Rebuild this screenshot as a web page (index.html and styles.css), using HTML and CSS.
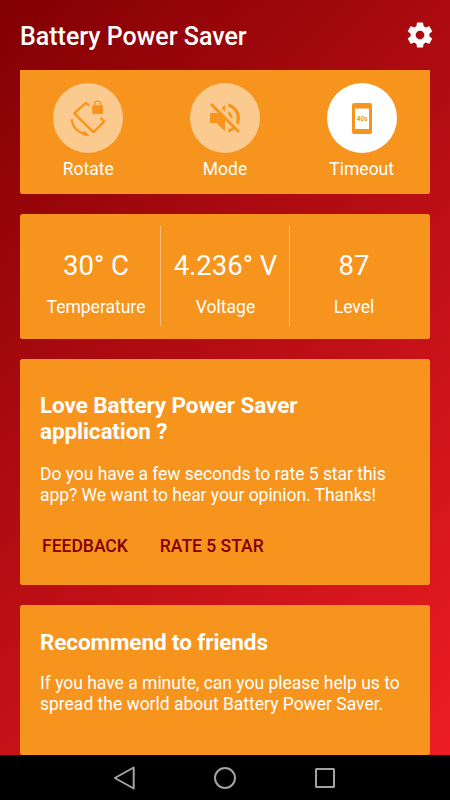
FILE: index.html
```html
<!DOCTYPE html>
<html lang="en">
<head>
<meta charset="utf-8">
<title>Battery Power Saver</title>
<link rel="stylesheet" href="styles.css">
</head>
<body>
<header class="app-bar">
  <h1>Battery Power Saver</h1>
  <svg class="gear" viewBox="0 0 24 24"><path d="M19.43 12.98c.04-.32.07-.64.07-.98s-.03-.66-.07-.98l2.11-1.65c.19-.15.24-.42.12-.64l-2-3.46c-.12-.22-.39-.3-.61-.22l-2.49 1c-.52-.4-1.08-.73-1.69-.98l-.38-2.65C14.46 2.18 14.25 2 14 2h-4c-.25 0-.46.18-.49.42l-.38 2.65c-.61.25-1.17.59-1.69.98l-2.49-1c-.23-.09-.49 0-.61.22l-2 3.46c-.13.22-.07.49.12.64l2.11 1.65c-.04.32-.07.65-.07.98s.03.66.07.98l-2.11 1.65c-.19.15-.24.42-.12.64l2 3.46c.12.22.39.3.61.22l2.49-1c.52.4 1.08.73 1.69.98l.38 2.65c.03.24.24.42.49.42h4c.25 0 .46-.18.49-.42l.38-2.65c.61-.25 1.17-.59 1.69-.98l2.49 1c.23.09.49 0 .61-.22l2-3.46c.12-.22.07-.49-.12-.64l-2.11-1.65zM12 15.5c-1.93 0-3.5-1.57-3.5-3.5s1.57-3.5 3.5-3.5 3.5 1.57 3.5 3.5-1.57 3.5-3.5 3.5z"/></svg>
</header>
<main class="content">
  <section class="card toggles">
    <div class="toggle">
      <div class="disc"><svg class="rotate-icon" viewBox="0 0 36 36"><path class="line" d="M19 5.6L15.9 2.9 4.3 13.4 23.4 32.1 34.2 21.6 30.6 17.8"/><path class="line" d="M1.6 19.2C2.6 26.6 7.5 32.4 15.4 34.2"/><path d="M14.3 30.6L19.6 35.8Q16 36.2 12.5 35z"/><path fill-rule="evenodd" d="M24 5.3V4.2a3.7 3.7 0 0 1 7.4 0v1.1h.6a1 1 0 0 1 1 1V13a1 1 0 0 1-1 1h-8.7a1 1 0 0 1-1-1V6.3a1 1 0 0 1 1-1zM25.3 5.3h4.8V4.1a2.4 2.4 0 0 0-4.8 0z"/></svg></div>
      <span>Rotate</span>
    </div>
    <div class="toggle">
      <div class="disc"><svg class="mode-icon" viewBox="0 0 24 24"><path d="M16.5 12c0-1.77-1.02-3.29-2.5-4.03v2.21l2.45 2.45c.03-.2.05-.41.05-.63zm2.5 0c0 .94-.2 1.82-.54 2.64l1.51 1.51C20.63 14.91 21 13.5 21 12c0-4.28-2.99-7.86-7-8.77v2.06c2.89.86 5 3.54 5 6.71zM4.27 3L3 4.27 7.73 9H3v6h4l5 5v-6.73l4.25 4.25c-.67.52-1.42.93-2.25 1.18v2.06c1.38-.31 2.63-.95 3.69-1.81L19.73 21 21 19.73l-9-9L4.27 3zM12 4L9.91 6.09 12 8.18V4z"/></svg></div>
      <span>Mode</span>
    </div>
    <div class="toggle">
      <div class="disc active"><svg class="timeout-icon" viewBox="0 0 20 31"><path fill-rule="evenodd" d="M2 0h16a2 2 0 0 1 2 2v27a2 2 0 0 1-2 2H2a2 2 0 0 1-2-2V2a2 2 0 0 1 2-2zM3 5.5v20.5h14V5.5z"/><text x="10.2" y="18" text-anchor="middle">40s</text></svg></div>
      <span>Timeout</span>
    </div>
  </section>
  <section class="card stats">
    <div class="stat"><strong>30° C</strong><span>Temperature</span></div>
    <div class="stat"><strong>4.236° V</strong><span>Voltage</span></div>
    <div class="stat"><strong>87</strong><span>Level</span></div>
  </section>
  <section class="card rate">
    <h2>Love Battery Power Saver<br>application ?</h2>
    <p>Do you have a few seconds to rate 5 star this<br>app? We want to hear your opinion. Thanks!</p>
    <div class="actions"><span>FEEDBACK</span><span>RATE 5 STAR</span></div>
  </section>
  <section class="card recommend">
    <h2>Recommend to friends</h2>
    <p>If you have a minute, can you please help us to<br>spread the world about Battery Power Saver.</p>
  </section>
</main>
<nav class="nav-bar">
  <svg viewBox="0 0 24 24"><path d="M20.7 1.5v21L1.8 12z"/></svg>
  <svg viewBox="0 0 24 24"><circle cx="12" cy="12" r="10"/></svg>
  <svg viewBox="0 0 24 24"><rect x="3" y="3" width="18" height="18" rx=".5"/></svg>
</nav>
</body>
</html>
```
FILE: styles.css
```css
* { box-sizing: border-box; }

body {
  margin: 0;
  width: 450px;
  height: 800px;
  display: flex;
  flex-direction: column;
  overflow: hidden;
  background: linear-gradient(135deg, #820003, #ed1c24 96%);
  color: #fff;
  font-family: Roboto, sans-serif;
  font-size: 17.5px;
}

h1, h2, p { margin: 0; white-space: nowrap; }

.app-bar {
  flex: none;
  height: 70px;
  display: flex;
  align-items: center;
  justify-content: space-between;
  padding: 3px 15px 0 20px;
}

.app-bar h1 {
  font-size: 25px;
  font-weight: 500;
}

.gear {
  width: 30px;
  height: 30px;
  margin-top: -3px;
  fill: #fff;
}

.content {
  flex: none;
  height: 685px;
  display: flex;
  flex-direction: column;
  gap: 20px;
  padding: 0 20px;
}

.card {
  flex: none;
  background: #f7941e;
  border-radius: 2.5px;
}

.toggles {
  height: 124px;
  display: grid;
  grid-template-columns: repeat(3, 1fr);
  border-radius: 0 0 2.5px 2.5px;
  padding-top: 13px;
}

.toggle {
  display: flex;
  flex-direction: column;
  align-items: center;
  gap: 6px;
  line-height: 21px;
}

.disc {
  width: 70px;
  height: 70px;
  display: flex;
  align-items: center;
  justify-content: center;
  border-radius: 50%;
  background: #fbca8f;
  fill: #f7941e;
}

.active { background: #fff; }

.rotate-icon {
  width: 36px;
  height: 36px;
}

.rotate-icon .line {
  fill: none;
  stroke: #f7941e;
  stroke-width: 2.2;
  stroke-linejoin: round;
}

.mode-icon { width: 40px; height: 40px; }

.timeout-icon { width: 20px; height: 31px; }

.timeout-icon text {
  font-size: 6.5px;
  font-weight: 700;
}

.stats {
  height: 125px;
  display: grid;
  grid-template-columns: 129px 129px 128px;
  padding: 12px 11px;
}

.stat {
  display: flex;
  flex-direction: column;
  align-items: center;
  gap: 15px;
  height: 100px;
  padding: 23px 0 0 1px;
  line-height: 21px;
}

.stat + .stat { border-left: 1px solid #fabf78; }

.stat strong {
  font-size: 27.5px;
  font-weight: 400;
  line-height: 33px;
  white-space: nowrap;
}

.rate {
  height: 226px;
  padding: 33px 20px 0;
}

h2 {
  font-size: 22.5px;
  font-weight: 700;
  line-height: 26px;
  letter-spacing: -0.1px;
}

p { line-height: 21px; }

.rate p {
  margin-top: 20px;
  letter-spacing: -0.04px;
}

.actions {
  display: flex;
  gap: 32px;
  margin-top: 30px;
  padding-left: 2px;
  color: #820003;
  font-weight: 500;
  line-height: 21px;
}

.recommend {
  height: 150px;
  padding: 24px 20px 0;
}

.recommend p {
  margin-top: 18px;
  letter-spacing: -0.01px;
}

.nav-bar {
  flex: none;
  height: 45px;
  display: flex;
  align-items: center;
  justify-content: center;
  gap: 76px;
  background: #000;
}

.nav-bar svg {
  width: 24px;
  height: 24px;
  fill: none;
  stroke: #a3a3a3;
  stroke-width: 2;
  stroke-linejoin: round;
}
```
